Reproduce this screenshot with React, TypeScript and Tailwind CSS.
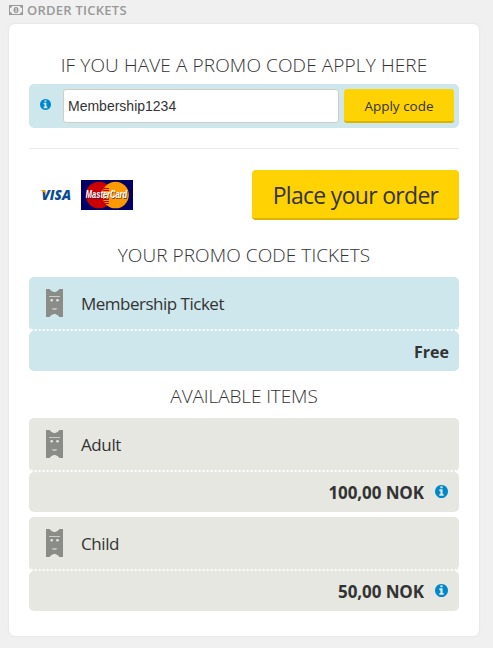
import React from 'react';

const tickets = [
    { name: 'Adult', price: '100,00 NOK' },
    { name: 'Child', price: '50,00 NOK' },
];

const InfoIcon = ({ className = '' }) => (
    <svg viewBox="0 128 1536 1536" className={`shrink-0 fill-[#0088cc] ${className}`}>
        <path d="M1024 1376v-160q0-14-9-23t-23-9h-96v-512q0-14-9-23t-23-9h-320q-14 0-23 9t-9 23v160q0 14 9 23t23 9h96v320h-96q-14 0-23 9t-9 23v160q0 14 9 23t23 9h448q14 0 23-9t9-23zm-128-896v-160q0-14-9-23t-23-9h-192q-14 0-23 9t-9 23v160q0 14 9 23t23 9h192q14 0 23-9t9-23zm640 416q0 209-103 385.5t-279.5 279.5-385.5 103-385.5-103-279.5-279.5-103-385.5 103-385.5 279.5-279.5 385.5-103 385.5 103 279.5 279.5 103 385.5z" />
    </svg>
);

const MoneyIcon = () => (
    <svg viewBox="0 0 14 10" className="mb-[2px] h-[10px] w-[14px] shrink-0">
        <path
            fill="#999"
            fillRule="evenodd"
            d="M0 0h14v10H0z M3 1A2 2 0 0 1 1 3v4a2 2 0 0 1 2 2h8a2 2 0 0 1 2-2V3a2 2 0 0 1-2-2z"
        />
        <ellipse cx="7" cy="5" rx="2.5" ry="3.1" fill="#999" />
        <path fill="#f0f0f0" d="M6.2 3.6 7 3h.5v3H8v.7H6.1V6h.6V3.9z" />
    </svg>
);

const TicketIcon = () => (
    <svg viewBox="0 0 17 28" className="h-7 w-[17px] shrink-0">
        <path fill="#8a8c88" d="M0 0h3.5Q5 2.5 8.5 3.2 12 2.5 13.5 0H17v28h-3.5Q12 25.5 8.5 24.8 5 25.5 3.5 28H0z" />
        <path fill="#dde3df" d="M3 7h11v1H3zM5.5 19.3h6q-1 1.7-3 1.7t-3-1.7z" opacity=".75" />
        <circle cx="5.7" cy="11.3" r="1.3" fill="#e3e8e4" />
        <circle cx="11.5" cy="11.3" r="1.3" fill="#e3e8e4" />
    </svg>
);

const VisaLogo = () => (
    <svg viewBox="0 0 36 24" className="h-6 w-9 overflow-visible">
        <text x="2.6" y="17" transform="scale(.96 1)" className="fill-[#0a4c8f] font-['Open_Sans',sans-serif] text-[14px] font-extrabold italic">VISA</text>
        <path fill="#f7a600" d="M.5 7H5q1 0 1.4 1l1 3.8Q5 8 .5 7z" />
    </svg>
);

const MasterCardLogo = () => (
    <svg viewBox="0 0 52 30" className="h-[30px] w-[52px]">
        <path fill="#000066" d="M0 0h52v30H0z" />
        <circle cx="18" cy="15" r="13.3" fill="#cc0000" />
        <circle cx="34.5" cy="15" r="13.3" fill="#ff9900" />
        <path stroke="#cc0000" d="M23 8.5h5M22 10.5h6M22 19.5h6M23 21.5h5M24 23.5h4" />
        <text
            x="6.5"
            y="18.5"
            transform="scale(.75 1)"
            className="fill-white font-['Liberation_Sans',sans-serif] text-[10px] font-bold italic [text-shadow:0.5px_0.5px_0_rgba(0,0,102,0.6)]"
        >
            MasterCard
        </text>
    </svg>
);

const Heading = ({ className = '', children }: { className?: string; children: React.ReactNode }) => (
    <h2 className={`text-center text-[19px] leading-[26px] font-light whitespace-nowrap text-[#333] ${className}`}>
        {children}
    </h2>
);

type TicketProps = { name: string; price: string; promo?: boolean };

const Ticket = ({ name, price, promo = false }: TicketProps) => {
    const bg = promo ? 'bg-[#cde7ec]' : 'bg-[#e6e7e1]';

    return (
        <div>
            <div className={`flex h-[54px] items-center rounded-[5px] border-b-2 border-dotted border-white pl-[17px] ${bg}`}>
                <TicketIcon />
                <span className={`ml-[18px] pt-[2px] text-[17px] text-[#333] ${promo ? 'tracking-[-0.5px]' : 'tracking-[-0.4px]'}`}>{name}</span>
            </div>
            <div className={`flex h-10 items-center justify-end rounded-[5px] pt-px font-bold text-[#333] ${promo ? 'pr-[10px] text-base' : 'pr-[11px] text-[17px] tracking-[-0.1px]'} ${bg}`}>
                {price}
                {!promo && <InfoIcon className="mb-[3px] ml-[11px] size-[13px]" />}
            </div>
        </div>
    );
};

export default function App() {
    return (
        <main className="h-[648px] w-[493px] overflow-hidden bg-[#f0f0f0] font-['Open_Sans','Noto_Sans',sans-serif]">
            <div className="flex h-6 items-center gap-1 pb-[3px] pl-[9px]">
                <MoneyIcon />
                <h1 className="text-[13px] font-semibold tracking-[0.25px] text-[#999]">ORDER TICKETS</h1>
            </div>

            <section className="ml-[9px] h-[612px] w-[470px] rounded-[6px] bg-white px-5 pt-7 shadow-[0_0_3px_rgba(0,0,0,0.08)]">
                <Heading className="tracking-[0.12px]">IF YOU HAVE A PROMO CODE APPLY HERE</Heading>

                <div className="mt-[6px] flex h-11 items-center rounded-[5px] bg-[#cde7ec] pr-[5px] pl-[11px]">
                    <InfoIcon className="mb-[3px] size-[11px]" />
                    <input
                        defaultValue="Membership1234"
                        className="ml-3 h-[34px] w-[276px] rounded-[3px] border border-[#d0cec5] bg-white px-[4px] font-['Liberation_Sans',sans-serif] text-sm text-[#333] outline-none"
                    />
                    <button className="ml-[5px] h-[34px] w-[110px] rounded-[3px] border-b-2 border-[#dbb300] bg-[#ffd203] pt-[2px] text-[13.5px] text-[#333]">
                        Apply code
                    </button>
                </div>

                <hr className="mt-5 border-[#eaeaea]" />

                <div className="mt-[21px] flex h-[50px] items-center justify-between">
                    <div className="flex items-center gap-[6px] pl-[10px]">
                        <VisaLogo />
                        <MasterCardLogo />
                    </div>
                    <button className="h-[50px] w-[207px] rounded-[4px] border-b-2 border-[#dbb300] bg-[#ffd203] pt-[2px] text-[23px] tracking-[-0.7px] text-[#333]">
                        Place your order
                    </button>
                </div>

                <Heading className="mt-[22px] tracking-[0.08px]">YOUR PROMO CODE TICKETS</Heading>
                <div className="mt-[9px]">
                    <Ticket name="Membership Ticket" price="Free" promo />
                </div>

                <Heading className="mt-3 tracking-[-0.1px]">AVAILABLE ITEMS</Heading>
                <div className="mt-[9px] space-y-[5px]">
                    {tickets.map((ticket) => (
                        <Ticket key={ticket.name} name={ticket.name} price={ticket.price} />
                    ))}
                </div>
            </section>
        </main>
    );
}
